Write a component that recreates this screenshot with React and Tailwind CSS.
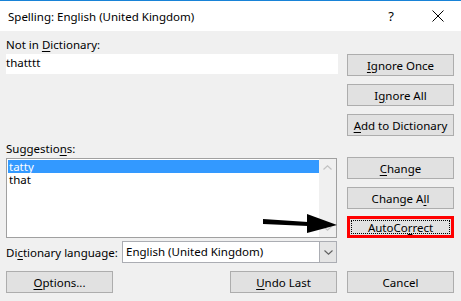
import React from "react";

const FONT = { fontFamily: '"Noto Sans", "Open Sans", sans-serif' };

const Key = ({ children }) => <span className="underline underline-offset-[2px]">{children}</span>;

const Btn = ({ children, className = "" }) => (
  <button className={`flex h-[22px] w-[107px] items-center justify-center whitespace-nowrap border border-[#adadad] bg-[#e1e1e1] text-[11.5px] text-black ${className}`}>
    {children}
  </button>
);

const ChevronUp = () => (
  <svg width="9" height="5" viewBox="0 0 9 5" className="block">
    <path d="M0.5 4.5 L4.5 0.8 L8.5 4.5" fill="none" stroke="#c2c2c2" strokeWidth="1.2" />
  </svg>
);

const ChevronDown = ({ color = "#606060" }) => (
  <svg width="9" height="5" viewBox="0 0 9 5" className="block">
    <path d="M0.5 0.5 L4.5 4.2 L8.5 0.5" fill="none" stroke={color} strokeWidth="1.1" />
  </svg>
);

export default function App() {
  return (
    <div className="relative h-[301px] w-[461px] overflow-hidden whitespace-nowrap bg-[#f0f0f0] text-[11.5px] leading-[15px] text-black" style={FONT}>
      {/* title bar */}
      <div className="flex h-[31px] items-center border-t border-[#1883d7] bg-white pl-2">
        <span className="flex-1">Spelling: English (United Kingdom)</span>
        <span className="mr-[38px] text-[13px]">?</span>
        <svg width="12" height="12" viewBox="0 0 12 12" className="mr-[17px]">
          <path d="M0.5 0.5 L11.5 11.5 M11.5 0.5 L0.5 11.5" stroke="#000" strokeWidth="1" />
        </svg>
      </div>

      <div className="flex gap-[9px] pl-[6px] pt-[6px]">
        {/* left column */}
        <div className="flex w-[332px] flex-col">
          <div className="h-[17px]">Not in <Key>D</Key>ictionary:</div>
          <div className="h-[20px] bg-white pt-[1px]">thatttt</div>
          <div className="mt-[66px] h-[18px] pt-[1px]">Suggestio<Key>n</Key>s:</div>
          <div className="flex h-[80px] w-[331px] border border-[#a0a0a0] bg-white">
            <div className="flex-1 pl-[1px] pt-[1px]">
              <div className="h-[13px] bg-[#3399ff] pl-[1px] leading-[13px] text-white">tatty</div>
              <div className="h-[14px] pl-[1px] leading-[14px]">that</div>
            </div>
            <div className="flex w-[17px] flex-col items-center justify-between bg-[#f0f0f0] py-[6px]">
              <ChevronUp />
              <ChevronDown color="#c2c2c2" />
            </div>
          </div>
          <div className="mt-[3px] flex h-[22px] items-center">
            <span className="w-[116px]">Di<Key>c</Key>tionary language:</span>
            <div className="flex h-[22px] w-[215px] border border-[#abadb3] bg-white">
              <span className="flex-1 pl-[3px] leading-[20px]">English (United Kingdom)</span>
              <div className="flex w-[17px] items-center justify-center border-l border-[#abadb3] bg-[#e5e5e5]">
                <ChevronDown />
              </div>
            </div>
          </div>
        </div>

        {/* right column */}
        <div className="mt-[17px] flex flex-col">
          <Btn><Key>I</Key>gnore Once</Btn>
          <Btn className="mt-[8px]">I<Key>g</Key>nore All</Btn>
          <Btn className="mt-[8px]"><Key>A</Key>dd to Dictionary</Btn>
          <Btn className="mt-[21px]"><Key>C</Key>hange</Btn>
          <Btn className="mt-[8px]">Change A<Key>l</Key>l</Btn>
          <div className="mt-[7px] h-[22px] w-[107px] border-[3px] border-[#ff0000] bg-[#e1e1e1] p-px">
            <div className="flex h-full items-center justify-center border border-dotted border-black">
              AutoCo<Key>r</Key>rect
            </div>
          </div>
        </div>
      </div>

      {/* bottom row */}
      <div className="mt-[8px] flex pl-[6px]">
        <Btn><Key>O</Key>ptions...</Btn>
        <Btn className="ml-[117px]"><Key>U</Key>ndo Last</Btn>
        <Btn className="ml-[10px]">Cancel</Btn>
      </div>

      {/* annotation arrow */}
      <svg className="absolute left-[262px] top-[212px]" width="78" height="24" viewBox="0 0 78 24">
        <polygon points="1,7 46,10 46,14 1,12" fill="#000" />
        <polygon points="45,2 75,13 45,21" fill="#000" />
      </svg>
    </div>
  );
}
